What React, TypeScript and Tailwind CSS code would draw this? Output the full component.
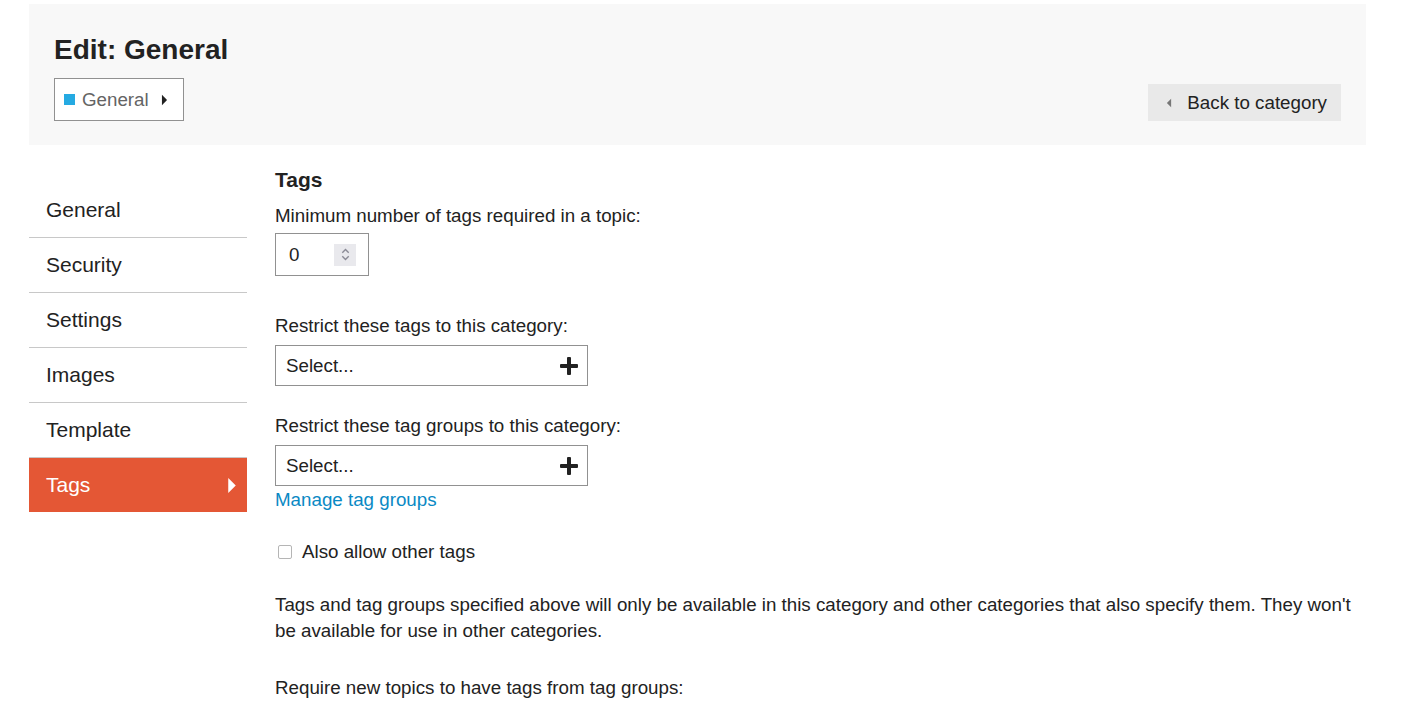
import React from 'react';

const navItems = ['General', 'Security', 'Settings', 'Images', 'Template', 'Tags'];

const CaretRight = ({ className }: { className?: string }) => (
  <svg viewBox="0 0 8 14" className={className} fill="currentColor">
    <path d="M1 1 L7 7 L1 13 Z" />
  </svg>
);

const CaretLeft = ({ className }: { className?: string }) => (
  <svg viewBox="0 0 8 14" className={className} fill="currentColor">
    <path d="M7 1 L1 7 L7 13 Z" />
  </svg>
);

const Plus = () => (
  <svg viewBox="0 0 18 18" className="w-[18px] h-[18px]" fill="#222">
    <rect x="7" y="0" width="4" height="18" rx="1" />
    <rect x="0" y="7" width="18" height="4" rx="1" />
  </svg>
);

const TagSelect = () => (
  <div className="w-[313px] h-[41px] border border-[#919191] bg-white flex items-center justify-between pl-[10px] pr-[9px]">
    <span className="text-[#222]">Select...</span>
    <Plus />
  </div>
);

export default function App() {
  return (
    <div className="font-['Liberation_Sans',Arial,sans-serif] text-[18.75px] leading-[26px] text-[#222] bg-white min-h-screen">
      <div className="ml-[29px] pt-[4px] w-[1337px]">
        {/* page header */}
        <div className="bg-[#f8f8f8] px-[25px] pt-[30px] pb-[24px] flex items-end justify-between">
          <div>
            <h1 className="text-[28px] leading-[32px] font-bold text-[#222]">Edit: General</h1>
            <div className="mt-[12px] inline-flex items-center h-[43px] border border-[#919191] bg-white pl-[9px] pr-[15px]">
              <span className="w-[11px] h-[11px] bg-[#25aae2] mr-[7px]" />
              <span className="text-[#646464]">General</span>
              <CaretRight className="w-[7px] h-[12px] ml-[12px] text-[#222]" />
            </div>
          </div>
          <button className="h-[37px] bg-[#e9e9e9] flex items-center pl-[18px] pr-[14px] text-[#222]">
            <CaretLeft className="w-[6px] h-[10px] text-[#777] mr-[15px]" />
            <span>Back to category</span>
          </button>
        </div>

        <div className="flex gap-[28px] pt-[22px]">
          {/* sidebar nav */}
          <ul className="w-[218px] mt-[16px] shrink-0">
            {navItems.map((item) =>
              item === 'Tags' ? (
                <li
                  key={item}
                  className="h-[54px] bg-[#e45735] text-white text-[21px] flex items-center justify-between pl-[17px] pr-[10px]"
                >
                  <span>{item}</span>
                  <CaretRight className="w-[10px] h-[19px] text-white" />
                </li>
              ) : (
                <li
                  key={item}
                  className="h-[55px] border-b border-[#c8c8c8] text-[21px] flex items-center pl-[17px]"
                >
                  {item}
                </li>
              )
            )}
          </ul>

          {/* tag settings */}
          <div className="flex-1">
            <h3 className="text-[21px] font-bold">Tags</h3>
            <div className="mt-[10px]">Minimum number of tags required in a topic:</div>
            <div className="mt-[4px] w-[94px] h-[43px] border border-[#919191] bg-white flex items-center justify-between pl-[13px] pr-[12px]">
              <span>0</span>
              <span className="w-[22px] h-[22px] bg-[#e9e9ed] flex items-center justify-center">
                <svg viewBox="0 0 12 18" className="w-[11px] h-[17px]" fill="none" stroke="#8a8a95" strokeWidth="1.5">
                  <path d="M2.5 7 L6 3.5 L9.5 7" />
                  <path d="M2.5 11 L6 14.5 L9.5 11" />
                </svg>
              </span>
            </div>

            <div className="mt-[37px]">Restrict these tags to this category:</div>
            <div className="mt-[6px]">
              <TagSelect />
            </div>

            <div className="mt-[27px]">Restrict these tag groups to this category:</div>
            <div className="mt-[6px]">
              <TagSelect />
            </div>
            <a className="block mt-[1px] text-[#0a89c4]" href="#">
              Manage tag groups
            </a>

            <label className="mt-[26px] flex items-center">
              <span className="w-[14px] h-[14px] border border-[#b5b5b5] rounded-[2px] bg-white ml-[3px] mr-[10px]" />
              <span>Also allow other tags</span>
            </label>

            <p className="mt-[27px] max-w-[1091px]">
              Tags and tag groups specified above will only be available in this category and other categories that also
              specify them. They won't be available for use in other categories.
            </p>

            <div className="mt-[31px]">Require new topics to have tags from tag groups:</div>
          </div>
        </div>
      </div>
    </div>
  );
}
